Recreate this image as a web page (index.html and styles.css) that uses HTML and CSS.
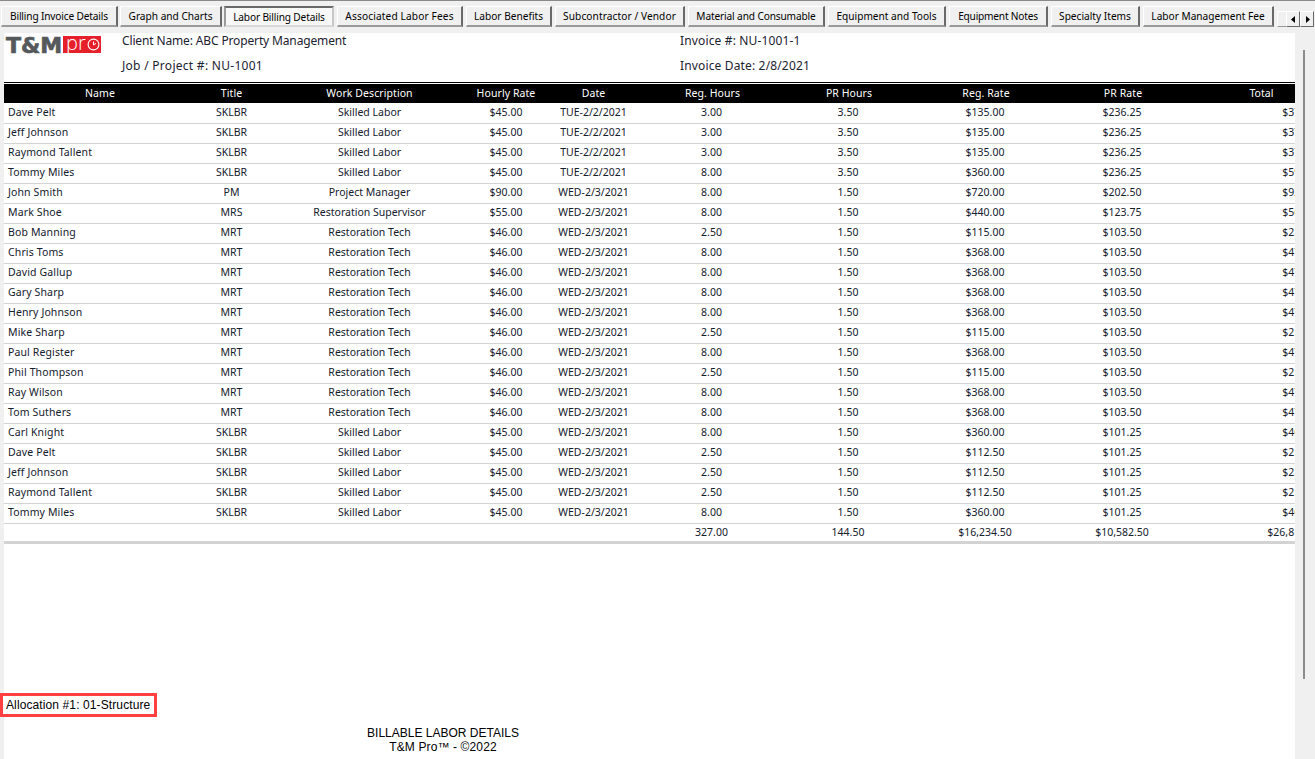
FILE: index.html
```html
<!DOCTYPE html>
<html lang="en">
<head>
<meta charset="utf-8">
<title>Labor Billing Details</title>
<link rel="stylesheet" href="styles.css">
</head>
<body>
<div class="app">
  <nav class="tabs">
    <button class="tab">Billing Invoice Details</button>
    <button class="tab">Graph and Charts</button>
    <button class="tab active">Labor Billing Details</button>
    <button class="tab">Associated Labor Fees</button>
    <button class="tab">Labor Benefits</button>
    <button class="tab">Subcontractor / Vendor</button>
    <button class="tab">Material and Consumable</button>
    <button class="tab">Equipment and Tools</button>
    <button class="tab">Equipment Notes</button>
    <button class="tab">Specialty Items</button>
    <button class="tab">Labor Management Fee</button>
    <span class="tab-stub"></span>
    <span class="spin">
      <span class="spin-btn"><svg width="5" height="7" viewBox="0 0 5 7"><path d="M4 0v7L0 3.5z"/></svg></span>
      <span class="spin-btn"><svg width="5" height="7" viewBox="0 0 5 7"><path d="M1 0v7l4-3.5z"/></svg></span>
    </span>
  </nav>
  <div class="body-row">
    <main class="report">
      <header class="report-head">
        <div class="logo">
          <span class="logo-tm">T&amp;M</span>
          <span class="logo-pro"><span class="logo-pr">pr</span><svg class="logo-clock" width="13" height="13" viewBox="0 0 13 13"><circle cx="6.5" cy="6.5" r="5.4" fill="none" stroke="#fff" stroke-width="1.1"/><path d="M6.5 3.5v3.4l2.6-1.5" fill="none" stroke="#fff" stroke-width="1"/></svg></span>
        </div>
        <div class="head-col client">
          <div class="ls-client">Client Name: ABC Property Management</div>
          <div class="ls-job">Job / Project #: NU-1001</div>
        </div>
        <div class="head-col invoice">
          <div class="ls-inv">Invoice #: NU-1001-1</div>
          <div class="ls-inv">Invoice Date: 2/8/2021</div>
        </div>
      </header>
      <div class="table-clip">
        <table class="grid">
          <colgroup>
            <col class="c1"><col class="c2"><col class="c3"><col class="c4"><col class="c5">
            <col class="c6"><col class="c7"><col class="c8"><col class="c9"><col class="c10">
          </colgroup>
          <thead>
            <tr><th>Name</th><th>Title</th><th>Work Description</th><th>Hourly Rate</th><th>Date</th><th>Reg. Hours</th><th>PR Hours</th><th>Reg. Rate</th><th>PR Rate</th><th>Total</th></tr>
          </thead>
          <tbody>
            <tr><td>Dave Pelt</td><td>SKLBR</td><td>Skilled Labor</td><td>$45.00</td><td>TUE-2/2/2021</td><td>3.00</td><td>3.50</td><td>$135.00</td><td>$236.25</td><td>$371.25</td></tr>
            <tr><td>Jeff Johnson</td><td>SKLBR</td><td>Skilled Labor</td><td>$45.00</td><td>TUE-2/2/2021</td><td>3.00</td><td>3.50</td><td>$135.00</td><td>$236.25</td><td>$371.25</td></tr>
            <tr><td>Raymond Tallent</td><td>SKLBR</td><td>Skilled Labor</td><td>$45.00</td><td>TUE-2/2/2021</td><td>3.00</td><td>3.50</td><td>$135.00</td><td>$236.25</td><td>$371.25</td></tr>
            <tr><td>Tommy Miles</td><td>SKLBR</td><td>Skilled Labor</td><td>$45.00</td><td>TUE-2/2/2021</td><td>8.00</td><td>3.50</td><td>$360.00</td><td>$236.25</td><td>$596.25</td></tr>
            <tr><td>John Smith</td><td>PM</td><td>Project Manager</td><td>$90.00</td><td>WED-2/3/2021</td><td>8.00</td><td>1.50</td><td>$720.00</td><td>$202.50</td><td>$922.50</td></tr>
            <tr><td>Mark Shoe</td><td>MRS</td><td>Restoration Supervisor</td><td>$55.00</td><td>WED-2/3/2021</td><td>8.00</td><td>1.50</td><td>$440.00</td><td>$123.75</td><td>$563.75</td></tr>
            <tr><td>Bob Manning</td><td>MRT</td><td>Restoration Tech</td><td>$46.00</td><td>WED-2/3/2021</td><td>2.50</td><td>1.50</td><td>$115.00</td><td>$103.50</td><td>$218.50</td></tr>
            <tr><td>Chris Toms</td><td>MRT</td><td>Restoration Tech</td><td>$46.00</td><td>WED-2/3/2021</td><td>8.00</td><td>1.50</td><td>$368.00</td><td>$103.50</td><td>$471.50</td></tr>
            <tr><td>David Gallup</td><td>MRT</td><td>Restoration Tech</td><td>$46.00</td><td>WED-2/3/2021</td><td>8.00</td><td>1.50</td><td>$368.00</td><td>$103.50</td><td>$471.50</td></tr>
            <tr><td>Gary Sharp</td><td>MRT</td><td>Restoration Tech</td><td>$46.00</td><td>WED-2/3/2021</td><td>8.00</td><td>1.50</td><td>$368.00</td><td>$103.50</td><td>$471.50</td></tr>
            <tr><td>Henry Johnson</td><td>MRT</td><td>Restoration Tech</td><td>$46.00</td><td>WED-2/3/2021</td><td>8.00</td><td>1.50</td><td>$368.00</td><td>$103.50</td><td>$471.50</td></tr>
            <tr><td>Mike Sharp</td><td>MRT</td><td>Restoration Tech</td><td>$46.00</td><td>WED-2/3/2021</td><td>2.50</td><td>1.50</td><td>$115.00</td><td>$103.50</td><td>$218.50</td></tr>
            <tr><td>Paul Register</td><td>MRT</td><td>Restoration Tech</td><td>$46.00</td><td>WED-2/3/2021</td><td>8.00</td><td>1.50</td><td>$368.00</td><td>$103.50</td><td>$471.50</td></tr>
            <tr><td>Phil Thompson</td><td>MRT</td><td>Restoration Tech</td><td>$46.00</td><td>WED-2/3/2021</td><td>2.50</td><td>1.50</td><td>$115.00</td><td>$103.50</td><td>$218.50</td></tr>
            <tr><td>Ray Wilson</td><td>MRT</td><td>Restoration Tech</td><td>$46.00</td><td>WED-2/3/2021</td><td>8.00</td><td>1.50</td><td>$368.00</td><td>$103.50</td><td>$471.50</td></tr>
            <tr><td>Tom Suthers</td><td>MRT</td><td>Restoration Tech</td><td>$46.00</td><td>WED-2/3/2021</td><td>8.00</td><td>1.50</td><td>$368.00</td><td>$103.50</td><td>$471.50</td></tr>
            <tr><td>Carl Knight</td><td>SKLBR</td><td>Skilled Labor</td><td>$45.00</td><td>WED-2/3/2021</td><td>8.00</td><td>1.50</td><td>$360.00</td><td>$101.25</td><td>$461.25</td></tr>
            <tr><td>Dave Pelt</td><td>SKLBR</td><td>Skilled Labor</td><td>$45.00</td><td>WED-2/3/2021</td><td>2.50</td><td>1.50</td><td>$112.50</td><td>$101.25</td><td>$213.75</td></tr>
            <tr><td>Jeff Johnson</td><td>SKLBR</td><td>Skilled Labor</td><td>$45.00</td><td>WED-2/3/2021</td><td>2.50</td><td>1.50</td><td>$112.50</td><td>$101.25</td><td>$213.75</td></tr>
            <tr><td>Raymond Tallent</td><td>SKLBR</td><td>Skilled Labor</td><td>$45.00</td><td>WED-2/3/2021</td><td>2.50</td><td>1.50</td><td>$112.50</td><td>$101.25</td><td>$213.75</td></tr>
            <tr><td>Tommy Miles</td><td>SKLBR</td><td>Skilled Labor</td><td>$45.00</td><td>WED-2/3/2021</td><td>8.00</td><td>1.50</td><td>$360.00</td><td>$101.25</td><td>$461.25</td></tr>
          </tbody>
          <tfoot>
            <tr><td></td><td></td><td></td><td></td><td></td><td>327.00</td><td>144.50</td><td>$16,234.50</td><td>$10,582.50</td><td>$26,817.00</td></tr>
          </tfoot>
        </table>
      </div>
      <div class="allocation">Allocation #1: 01-Structure</div>
      <footer class="report-foot">
        <div>BILLABLE LABOR DETAILS</div>
        <div class="foot-brand">T&amp;M Pro™ - ©2022</div>
      </footer>
    </main>
    <aside class="scrollbar"><div class="thumb"></div></aside>
  </div>
</div>
</body>
</html>
```
FILE: styles.css
```css
* { box-sizing: border-box; }
html, body { margin: 0; height: 100%; overflow: hidden; }
body { background: #f0f0f0; color: #000; font-family: "Noto Sans", "Liberation Sans", sans-serif; }
.app { width: 1315px; height: 759px; display: flex; flex-direction: column; border-top: 1px solid #8a8a8a; }

.tabs { display: flex; height: 32px; padding: 5px 0 0 1px; flex: none; align-items: flex-start; gap: 3px; }
.tab {
  height: 21px; margin: 0; padding: 0 0 1px; flex: none;
  background: #f0f0f0; color: #000;
  border: 1px solid #fff; border-right: 2px solid #696969; border-bottom: 2px solid #9a9a9a;
  font: 10.15px "Noto Sans", sans-serif; text-align: center; white-space: nowrap;
}
.tab:nth-child(1) { width: 117px; margin-right: -1px; letter-spacing: -0.15px; }
.tab:nth-child(2) { width: 102px; margin-right: -1px; }
.tab:nth-child(3) { width: 110px; letter-spacing: -0.15px; }
.tab:nth-child(4) { width: 126px; letter-spacing: 0.14px; }
.tab:nth-child(5) { width: 86px; }
.tab:nth-child(6) { width: 130px; letter-spacing: 0.09px; }
.tab:nth-child(7) { width: 137px; letter-spacing: -0.13px; }
.tab:nth-child(8) { width: 118px; }
.tab:nth-child(9) { width: 99px; letter-spacing: -0.2px; }
.tab:nth-child(10) { width: 89px; }
.tab:nth-child(11) { width: 131px; }
.tab.active {
  border: 2px solid #a0a0a0; border-top-color: #696969; border-left-color: #9a9a9a;
  border-right-color: #c8c8c8; border-bottom-color: #d8d8d8;
  background: #f8f8f8; padding: 1px 0 0;
}
.tab-stub { width: 9px; height: 16px; margin-top: 5px; border: 1px solid #fff; border-right: 0; border-bottom: 1px solid #9a9a9a; flex: none; }
.spin { display: flex; margin: 5px 0 0 -3px; flex: none; }
.spin-btn {
  width: 14px; height: 16px; display: flex; align-items: center; justify-content: center;
  background: #f0f0f0; border: 1px solid #fff; border-right-color: #696969; border-bottom-color: #696969;
}
.spin-btn svg { fill: #000; }

.body-row { flex: 1; display: flex; min-height: 0; padding-left: 4px; }
.report { width: 1291px; background: #fff; display: flex; flex-direction: column; min-width: 0; }
.report-head { height: 49px; display: flex; flex: none; font-size: 12px; }
.logo { width: 118px; padding: 3px 0 0 2px; display: flex; align-items: flex-start; gap: 1px; flex: none; }
.logo-tm { font: 700 22px/20px "DejaVu Sans", sans-serif; color: #55595c; -webkit-text-stroke: 0.7px #55595c; width: 56px; white-space: nowrap; }
.logo-pro {
  width: 38px; height: 17px; background: #e5202a; color: #fff;
  padding-left: 3px; display: flex; align-items: center; gap: 1px;
}
.logo-pr { font: 300 20px/17px "Open Sans", sans-serif; height: 17px; margin-top: -5px; white-space: nowrap; }
.logo-clock { flex: none; }
.head-col { display: flex; flex-direction: column; gap: 7px; margin-top: -1px; line-height: 18px; color: #1c2230; }
.client { width: 558px; }
.ls-client { letter-spacing: -0.14px; }
.ls-job { letter-spacing: 0.28px; }
.ls-inv { letter-spacing: 0.15px; }

.table-clip { overflow: hidden; flex: none; border-top: 1px solid #000; }
.grid { width: 1323px; table-layout: fixed; border-collapse: collapse; font-size: 10.5px; margin-top: 1px; }
.c1 { width: 192px; } .c2 { width: 71px; } .c3 { width: 205px; } .c4 { width: 68px; } .c5 { width: 107px; }
.c6 { width: 129px; } .c7 { width: 144px; } .c8 { width: 130px; } .c9 { width: 144px; } .c10 { width: 133px; }
.grid th { height: 19px; background: #000; color: #fff; font-weight: 400; text-align: center; padding: 0 0 1px; letter-spacing: 0.08px; }
.grid th:nth-child(n+6) { padding-left: 2px; }
.grid td { height: 20px; padding: 0; text-align: center; border-bottom: 1px solid #d3d3d3; color: #14202c; white-space: nowrap; }
.grid tbody td { padding-bottom: 2px; }
.grid tbody tr > td:first-child { text-align: left; padding-left: 4px; letter-spacing: 0.13px; }
.grid td:last-child { text-align: right; padding-right: 6px; }
.grid tfoot td { height: 19px; border-bottom: 3px solid #d3d3d3; }

.allocation {
  width: 157px; height: 24px; margin: 149px 0 0 -4px; padding-left: 3px;
  border: 3px solid #ff4040; background: #fff; letter-spacing: 0.11px;
  font: 12px/18px "Liberation Sans", sans-serif; white-space: nowrap; color: #000; flex: none;
}
.report-foot { width: 878px; margin-top: 9px; text-align: center; font: 12px/14px "Liberation Sans", sans-serif; color: #000; }
.foot-brand { letter-spacing: 0.12px; }

.scrollbar { width: 20px; background: #f0f0f0; padding: 17px 0 0 8px; }
.thumb { width: 2px; height: 629px; background: #8c8c8c; }
```
